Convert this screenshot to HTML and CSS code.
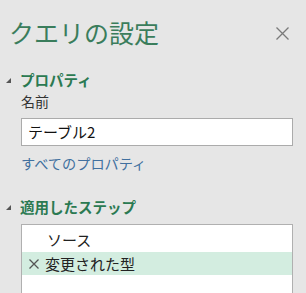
FILE: index.html
```html
<!DOCTYPE html>
<html lang="ja">
<head>
<meta charset="utf-8">
<link rel="stylesheet" href="styles.css">
</head>
<body>
<div class="pane">
  <div class="header">
    <div class="title">クエリの設定</div>
    <svg class="close" width="13" height="13" viewBox="0 0 13 13"><path d="M0.5 0.5 L12.5 12.5 M12.5 0.5 L0.5 12.5" stroke="#7a7a7a" stroke-width="1.3" fill="none"/></svg>
  </div>
  <div class="section-head sh1">
    <svg class="tri" width="5" height="5" viewBox="0 0 5 5"><polygon points="0,5 5,5 5,0" fill="#555"/></svg>
    <span>プロパティ</span>
  </div>
  <div class="label">名前</div>
  <div class="input">テーブル2</div>
  <div class="link">すべてのプロパティ</div>
  <div class="section-head sh2">
    <svg class="tri" width="5" height="5" viewBox="0 0 5 5"><polygon points="0,5 5,5 5,0" fill="#555"/></svg>
    <span>適用したステップ</span>
  </div>
  <div class="steps">
    <div class="step"><span class="icon"></span><span class="stxt src">ソース</span></div>
    <div class="step sel"><span class="icon"><svg width="10" height="10" viewBox="0 0 10 10"><path d="M0.5 0.5 L9.5 9.5 M9.5 0.5 L0.5 9.5" stroke="#555" stroke-width="1.3" fill="none"/></svg></span><span class="stxt">変更された型</span></div>
  </div>
</div>
</body>
</html>
```

FILE: styles.css
```css
html, body {
  margin: 0;
  padding: 0;
  background: #e6e6e6;
}
body {
  width: 306px;
  height: 293px;
  overflow: hidden;
  font-family: "Noto Sans CJK JP", "Noto Sans", sans-serif;
}
.pane {
  display: flex;
  flex-direction: column;
}
.header {
  display: flex;
  align-items: center;
  justify-content: space-between;
  padding: 14px 17px 0 9px;
  height: 36px;
}
.title {
  font-size: 25px;
  line-height: 36px;
  color: #3a7d5c;
}
.close {
  display: block;
  margin-top: 2px;
}
.section-head {
  display: flex;
  align-items: center;
  height: 20px;
  padding-left: 6px;
  font-size: 14.5px;
  font-weight: bold;
  color: #2b7a52;
}
.section-head .tri {
  margin-right: 9px;
  margin-top: 3px;
}
.sh1 { margin-top: 19px; }
.sh2 { margin-top: 23px; }
.label {
  margin-top: 3px;
  margin-left: 21px;
  height: 18px;
  line-height: 18px;
  font-size: 14px;
  color: #333;
}
.input {
  margin-top: 8px;
  margin-left: 21px;
  width: 272px;
  height: 28px;
  box-sizing: border-box;
  border: 1px solid #ababab;
  background: #fff;
  padding-left: 6px;
  font-size: 15px;
  line-height: 26px;
  color: #111;
}
.link {
  margin-top: 7px;
  margin-left: 21px;
  height: 20px;
  line-height: 20px;
  font-size: 14.2px;
  color: #41709f;
}
.steps {
  margin-top: 8px;
  margin-left: 21px;
  width: 272px;
  height: 80px;
  box-sizing: border-box;
  border: 1px solid #b0b0b0;
  background: #fff;
  padding-top: 2px;
}
.step {
  display: flex;
  align-items: center;
  height: 25px;
  font-size: 15px;
  color: #222;
}
.step.sel {
  background: #d3ede0;
  height: 23px;
}
.icon {
  width: 10px;
  height: 10px;
  margin-left: 7px;
  margin-right: 6px;
  display: flex;
}
.src {
  padding-left: 2px;
}
```
